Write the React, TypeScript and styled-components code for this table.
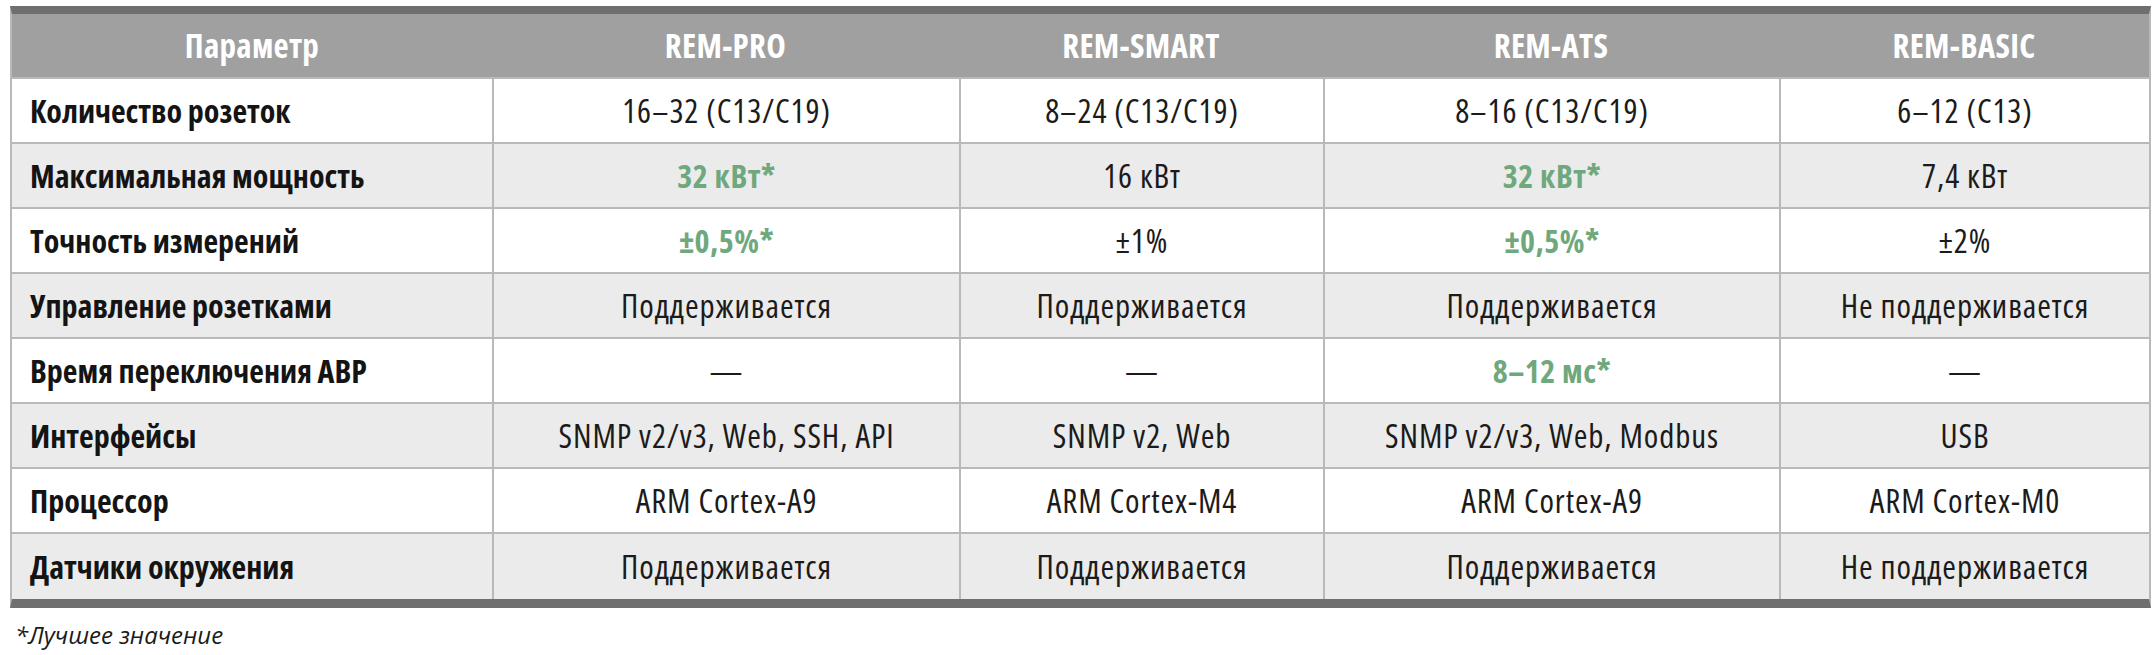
import React from "react";
import styled, { createGlobalStyle } from "styled-components";

type Cell = { text: string; best?: boolean };
type Row = { name: string; cells: Cell[] };

const models = ["REM-PRO", "REM-SMART", "REM-ATS", "REM-BASIC"];
const colWidths = [480, 467, 364, 456, 370];

const rows: Row[] = [
  {
    name: "Количество розеток",
    cells: [{ text: "16–32 (C13/C19)" }, { text: "8–24 (C13/C19)" }, { text: "8–16 (C13/C19)" }, { text: "6–12 (C13)" }],
  },
  {
    name: "Максимальная мощность",
    cells: [{ text: "32 кВт*", best: true }, { text: "16 кВт" }, { text: "32 кВт*", best: true }, { text: "7,4 кВт" }],
  },
  {
    name: "Точность измерений",
    cells: [{ text: "±0,5%*", best: true }, { text: "±1%" }, { text: "±0,5%*", best: true }, { text: "±2%" }],
  },
  {
    name: "Управление розетками",
    cells: [{ text: "Поддерживается" }, { text: "Поддерживается" }, { text: "Поддерживается" }, { text: "Не поддерживается" }],
  },
  {
    name: "Время переключения АВР",
    cells: [{ text: "—" }, { text: "—" }, { text: "8–12 мс*", best: true }, { text: "—" }],
  },
  {
    name: "Интерфейсы",
    cells: [{ text: "SNMP v2/v3, Web, SSH, API" }, { text: "SNMP v2, Web" }, { text: "SNMP v2/v3, Web, Modbus" }, { text: "USB" }],
  },
  {
    name: "Процессор",
    cells: [{ text: "ARM Cortex-A9" }, { text: "ARM Cortex-M4" }, { text: "ARM Cortex-A9" }, { text: "ARM Cortex-M0" }],
  },
  {
    name: "Датчики окружения",
    cells: [{ text: "Поддерживается" }, { text: "Поддерживается" }, { text: "Поддерживается" }, { text: "Не поддерживается" }],
  },
];

function App() {
  return (
    <Page>
      <GlobalStyle />
      <Table>
        <colgroup>
          {colWidths.map((w, i) => (
            <col key={i} style={{ width: w }} />
          ))}
        </colgroup>
        <thead>
          <tr>
            <Th>Параметр</Th>
            {models.map((m) => (
              <Th key={m}>{m}</Th>
            ))}
          </tr>
        </thead>
        <tbody>
          {rows.map((r, i) => (
            <Tr key={r.name} $shaded={i % 2 === 1} $last={i === rows.length - 1}>
              <NameCell>{r.name}</NameCell>
              {r.cells.map((c, j) => (
                <Td key={j} $best={c.best}>
                  {c.text}
                </Td>
              ))}
            </Tr>
          ))}
        </tbody>
      </Table>
      <Note>*Лучшее значение</Note>
    </Page>
  );
}

const GlobalStyle = createGlobalStyle`
  body {
    margin: 0;
    background: #ffffff;
    font-family: "Open Sans", "Noto Sans", sans-serif;
    font-stretch: 75%;
    color: #1b1b1b;
  }
`;

const Page = styled.main`
  padding: 6px 8px 0 10px;
`;

const Table = styled.table`
  width: 2138px;
  table-layout: fixed;
  border-collapse: separate;
  border-spacing: 0;
  border-top: 8px solid #6f6f6f;
  border-bottom: 9px solid #6f6f6f;
  border-left: 2px solid #b9b9b9;
  border-right: 2px solid #b9b9b9;
`;

const Th = styled.th`
  height: 63px;
  padding: 0;
  background: #a0a0a0;
  color: #ffffff;
  font-size: 33px;
  letter-spacing: 0.3px;
  font-weight: 700;
  text-align: center;
  border-bottom: 2px solid #b9b9b9;
`;

const Tr = styled.tr<{ $shaded: boolean; $last: boolean }>`
  background: ${(p) => (p.$shaded ? "#ebebeb" : "#ffffff")};

  & > td {
    border-bottom: ${(p) => (p.$last ? "none" : "2px solid #b9b9b9")};
    height: ${(p) => (p.$last ? "65px" : "63px")};
  }
`;

const Td = styled.td<{ $best?: boolean }>`
  padding: 0 8px;
  text-align: center;
  font-size: ${(p) => (p.$best ? "32px" : "33px")};
  letter-spacing: ${(p) => (p.$best ? "0.5px" : "0.9px")};
  white-space: nowrap;
  border-left: 2px solid #b9b9b9;
  font-weight: ${(p) => (p.$best ? 700 : 400)};
  color: ${(p) => (p.$best ? "#70a87d" : "#1b1b1b")};
`;

const NameCell = styled.td`
  padding: 0 0 0 18px;
  text-align: left;
  font-size: 32px;
  font-weight: 700;
  color: #141414;
  white-space: nowrap;
`;

const Note = styled.p`
  margin: 10px 0 0 5px;
  font-size: 24px;
  font-stretch: 100%;
  font-style: italic;
  color: #1b1b1b;
`;

export default App;
